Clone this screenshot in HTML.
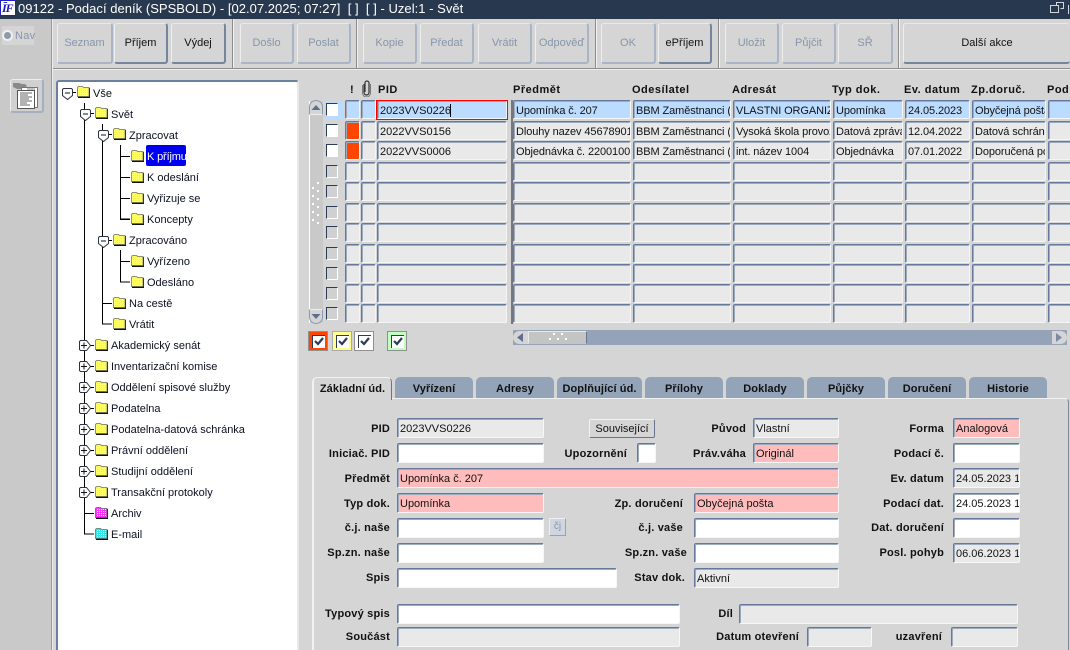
<!DOCTYPE html>
<html style="height:650px;overflow:hidden"><head><meta charset="utf-8"><title>Podací deník</title>
<style>
html,body{margin:0;padding:0}
body{width:1070px;height:650px;overflow:hidden;position:relative;background:#d5d5d5;font:11px "Liberation Sans",Arial,sans-serif;color:#111}
div,span{position:absolute;box-sizing:border-box;white-space:nowrap}
.b{top:23px;height:41px;background:#d5d5d5;border:1px solid #a9b4c4;border-top-color:#e9e9e9;border-left-color:#eee;border-right:2px solid #a9b4c4;border-bottom:2px solid #a9b4c4;border-radius:3px;text-align:center;line-height:38px;color:#8795ab;font-size:11px}
.b.e{color:#111;border-right-color:#75859e;border-bottom-color:#75859e}
.sep{top:19px;height:49px;width:2px;background:linear-gradient(90deg,#8b8b8b 50%,#f2f2f2 50%)}
.r{left:0;width:1070px;height:19px}
.r div{top:0;height:19px;background:#e9e9e9;border-top:1px solid #66799a;border-left:1px solid #66799a;border-right:1px solid #f5f5f5;border-bottom:1px solid #f5f5f5;box-shadow:inset 1px 1px #9dabc0;border-radius:2px;line-height:20px;padding-left:2px;overflow:hidden;letter-spacing:-.1px}
.r .k{left:326px;top:3px;width:12px;height:13px;background:#d0d0d0;border-color:#fff;border-top-color:#2c3b58;border-left-color:#2c3b58;border-width:1px;border-radius:0;box-shadow:none}
.r .a{left:345px;width:15px}.r .g{left:361px;width:15px}.r .p{left:377px;width:130px;letter-spacing:0}.r .q{left:513px;width:118px}.r .o{left:633px;width:98px}.r .d{left:733px;width:98px}.r .t{left:833px;width:70px}.r .v{left:905px;width:65px}.r .z{left:972px;width:74px}.r .w{left:1048px;width:30px}
.r.s div{background:#bcdcff}.r.s .k{background:#fff}
.r .or{background:#ff4500}.r .k.on{background:#fff}
.h{top:83px;font-weight:bold;letter-spacing:.5px;line-height:14px;font-size:11px}
.tr{line-height:14px;color:#0b1020;margin-top:1px}
.tab{top:377px;height:21px;background:#93a3b8;border-radius:5px 5px 0 0;text-align:center;font-weight:bold;line-height:24px;letter-spacing:.1px;color:#111}
.l{font-weight:bold;text-align:right;line-height:14px;letter-spacing:.2px;margin-top:1px}
.f{height:20px;border-top:1px solid #66799a;border-left:1px solid #66799a;border-right:1px solid #f7f7f7;border-bottom:1px solid #f7f7f7;box-shadow:inset 1px 1px #9dabc0;border-radius:2px;background:#fff;line-height:21px;padding-left:2px;overflow:hidden;font-size:11px}
.y{background:#e9e9e9}.pk{background:#ffbcbc}
.cb{top:331px;width:20px;height:20px;border:1px solid #909090}
.cb svg{position:absolute;left:3px;top:3px}
</style></head><body>

<svg width="0" height="0" style="position:absolute"><defs>
<pattern id="dy" width="2" height="2" patternUnits="userSpaceOnUse"><rect width="2" height="2" fill="#ffff60"/><rect width="1" height="1" fill="#e8e8a0"/></pattern>
<pattern id="dm" width="2" height="2" patternUnits="userSpaceOnUse"><rect width="2" height="2" fill="#ff30ff"/><rect width="1" height="1" fill="#ffe0ff"/></pattern>
<pattern id="dc" width="2" height="2" patternUnits="userSpaceOnUse"><rect width="2" height="2" fill="#30e8e8"/><rect width="1" height="1" fill="#e0ffff"/></pattern>
<symbol id="fy" viewBox="0 0 13 12"><path d="M.5 10.500V1.500L1.500.5h4l1 1h5.500v9z" fill="url(#dy)" stroke="#909070"/><path d="M1 11.500h12V2" fill="none" stroke="#111" stroke-width="1.400"/></symbol>
<symbol id="fm" viewBox="0 0 13 12"><path d="M.5 10.500V1.500L1.500.5h4l1 1h5.500v9z" fill="url(#dm)" stroke="#8c708c"/><path d="M1 11.500h12V2" fill="none" stroke="#111" stroke-width="1.400"/></symbol>
<symbol id="fc" viewBox="0 0 13 12"><path d="M.5 10.500V1.500L1.500.5h4l1 1h5.500v9z" fill="url(#dc)" stroke="#708c8c"/><path d="M1 11.500h12V2" fill="none" stroke="#111" stroke-width="1.400"/></symbol>
<symbol id="mn" viewBox="0 0 11 12"><path d="M1.500.5h8l1 1v6l-5 4-5-4v-6z" fill="#fff" stroke="#2c3344"/><path d="M3 5h5" stroke="#111"/></symbol>
<symbol id="pl" viewBox="0 0 12 11"><path d="M1.500.5h6l4 5-4 5h-6l-1-1v-8z" fill="#fff" stroke="#2c3344"/><path d="M2 5.500h6M5 2.500v6" stroke="#111"/></symbol>
<symbol id="ck" viewBox="0 0 13 13"><rect x="0" y="0" width="13" height="13" fill="#fff"/><path d="M.5 13V.5H13" fill="none" stroke="#2c3b58"/><path d="M3 6l3 3 5-6" fill="none" stroke="#2c3b58" stroke-width="2.200"/></symbol>
</defs></svg>

<!-- title bar -->
<div style="left:0;top:0;width:1070px;height:19px;background:#28384f"></div>
<div style="left:0;top:0;width:16px;height:16px;background:#fff;border:1px solid #2020c0"></div>
<div style="left:2px;top:0;font:italic bold 12px 'Liberation Serif',serif;color:#1515c8;letter-spacing:-1px;line-height:16px">ĪF</div>
<div style="left:18px;top:1px;color:#fff;font-size:13px;line-height:16px;letter-spacing:.03px">09122 - Podací deník (SPSBOLD) - [02.07.2025; 07:27]&nbsp; [ ]&nbsp; [ ] - Uzel:1 - Svět</div>
<svg style="position:absolute;left:1050px;top:2px" width="20" height="14"><path d="M6.500 3.500V.5h7v6h-3M.5 3.500h8v7h-8z" fill="none" stroke="#cfd6df"/><path d="M18.500 3v9" stroke="#cfd6df"/></svg>

<!-- sidebar -->
<div style="left:0;top:19px;width:51px;height:631px;background:#c9c9c9"></div>
<div style="left:51px;top:19px;width:2px;height:631px;background:linear-gradient(90deg,#999 50%,#eee 50%)"></div>
<div style="left:2px;top:26px;width:32px;height:19px;background:#d5d5d5"></div>
<div style="left:2px;top:30px;width:11px;height:11px;border-radius:50%;background:#8f99a8;border:2px solid #eef0f2"></div>
<div style="left:15px;top:29px;color:#8795ab;line-height:14px;letter-spacing:.3px">Nav</div>
<div style="left:10px;top:79px;width:34px;height:34px;border:1px solid #eee;border-right:2px solid #a4afc0;border-bottom:2px solid #a4afc0;border-radius:3px;background:#d0d0d0"></div>
<svg style="position:absolute;left:12px;top:81px" width="28" height="28"><path d="M1 2h6l3 1h3l2 2-3 3H5L1 6z" fill="#8a8a8a"/><rect x="9.500" y="6.500" width="16" height="20" fill="#fff" stroke="#777"/><rect x="5.500" y="9.500" width="17" height="18" fill="#fff" stroke="#555"/><path d="M8 12h12M8 14h8M8 16h12M8 18h9M8 20h12M8 22h7M8 24h10" stroke="#666"/><path d="M15 8h8" stroke="#888"/></svg>

<!-- toolbar -->
<div style="left:53px;top:68px;width:1017px;height:2px;background:linear-gradient(#8f8f8f 50%,#eee 50%)"></div>
<div class="b" style="left:57px;width:56px">Seznam</div>
<div class="b e" style="left:114px;width:54px">Příjem</div>
<div class="b e" style="left:171px;width:55px">Výdej</div>
<div class="sep" style="left:232px"></div>
<div class="b" style="left:240px;width:54px">Došlo</div>
<div class="b" style="left:297px;width:54px">Poslat</div>
<div class="b" style="left:363px;width:54px">Kopie</div>
<div class="sep" style="left:356px"></div>
<div class="b" style="left:420px;width:54px">Předat</div>
<div class="b" style="left:478px;width:54px">Vrátit</div>
<div class="b" style="left:535px;width:54px">Odpověď</div>
<div class="sep" style="left:595px"></div>
<div class="b" style="left:601px;width:55px">OK</div>
<div class="b e" style="left:658px;width:54px">ePříjem</div>
<div class="sep" style="left:718px"></div>
<div class="b" style="left:725px;width:54px">Uložit</div>
<div class="b" style="left:782px;width:54px">Půjčit</div>
<div class="b" style="left:838px;width:55px">SŘ</div>
<div class="sep" style="left:898px"></div>
<div class="b e" style="left:903px;width:167px;border-right:0">Další akce</div>

<!-- tree -->
<div style="left:56px;top:80px;width:243px;height:570px;background:#fff;border:2px solid #6b7f9e;border-right:2px solid #e8e8e8;border-bottom:0;border-radius:3px 3px 0 0"></div>
<svg style="position:absolute;left:0;top:0" width="300" height="650">
<g stroke="#000" fill="none" shape-rendering="crispEdges">
<path d="M84.500 103V534H94M102.500 124V324H112M120.500 145V219H130M120.500 250V282H130"/>
<path d="M73 92.500h3M91 113.500h3M109 134.500h3M120 156.500h10M120 177.500h10M120 198.500h10M120 219.500h10M109 240.500h3M120 261.500h10M102 303.500h10M90 345.500h4M90 366.500h4M90 387.500h4M90 408.500h4M90 429.500h4M90 450.500h4M90 471.500h4M90 492.500h4M85 513.500h9"/>
</g>
<use href="#mn" x="62" y="88" width="11" height="12"/><use href="#mn" x="80" y="109" width="11" height="12"/><use href="#mn" x="98" y="130" width="11" height="12"/><use href="#mn" x="98" y="236" width="11" height="12"/>
<use href="#pl" x="79" y="340" width="12" height="11"/><use href="#pl" x="79" y="361" width="12" height="11"/><use href="#pl" x="79" y="382" width="12" height="11"/><use href="#pl" x="79" y="403" width="12" height="11"/><use href="#pl" x="79" y="424" width="12" height="11"/><use href="#pl" x="79" y="445" width="12" height="11"/><use href="#pl" x="79" y="466" width="12" height="11"/><use href="#pl" x="79" y="487" width="12" height="11"/>
<g>
<use href="#fy" x="77" y="86" width="13" height="12"/><use href="#fy" x="95" y="107" width="13" height="12"/><use href="#fy" x="113" y="128" width="13" height="12"/><use href="#fy" x="131" y="150" width="13" height="12"/><use href="#fy" x="131" y="171" width="13" height="12"/><use href="#fy" x="131" y="192" width="13" height="12"/><use href="#fy" x="131" y="213" width="13" height="12"/><use href="#fy" x="113" y="234" width="13" height="12"/><use href="#fy" x="131" y="255" width="13" height="12"/><use href="#fy" x="131" y="276" width="13" height="12"/><use href="#fy" x="113" y="297" width="13" height="12"/><use href="#fy" x="113" y="318" width="13" height="12"/><use href="#fy" x="95" y="339" width="13" height="12"/><use href="#fy" x="95" y="360" width="13" height="12"/><use href="#fy" x="95" y="381" width="13" height="12"/><use href="#fy" x="95" y="402" width="13" height="12"/><use href="#fy" x="95" y="423" width="13" height="12"/><use href="#fy" x="95" y="444" width="13" height="12"/><use href="#fy" x="95" y="465" width="13" height="12"/><use href="#fy" x="95" y="486" width="13" height="12"/><use href="#fm" x="95" y="507" width="13" height="12"/><use href="#fc" x="95" y="528" width="13" height="12"/>
</g></svg>
<div style="left:146px;top:145px;width:40px;height:21px;background:#0000f0;border-radius:2px"></div>
<div class="tr" style="left:93px;top:86px">Vše</div>
<div class="tr" style="left:111px;top:107px">Svět</div>
<div class="tr" style="left:129px;top:128px">Zpracovat</div>
<div class="tr" style="left:147px;top:149px;color:#fff;letter-spacing:-.15px">K příjmu</div>
<div class="tr" style="left:147px;top:170px">K odeslání</div>
<div class="tr" style="left:147px;top:191px">Vyřizuje se</div>
<div class="tr" style="left:147px;top:212px">Koncepty</div>
<div class="tr" style="left:129px;top:233px">Zpracováno</div>
<div class="tr" style="left:147px;top:254px">Vyřízeno</div>
<div class="tr" style="left:147px;top:275px">Odesláno</div>
<div class="tr" style="left:129px;top:296px">Na cestě</div>
<div class="tr" style="left:129px;top:317px">Vrátit</div>
<div class="tr" style="left:111px;top:338px">Akademický senát</div>
<div class="tr" style="left:111px;top:359px">Inventarizační komise</div>
<div class="tr" style="left:111px;top:380px">Oddělení spisové služby</div>
<div class="tr" style="left:111px;top:401px">Podatelna</div>
<div class="tr" style="left:111px;top:422px">Podatelna-datová schránka</div>
<div class="tr" style="left:111px;top:443px">Právní oddělení</div>
<div class="tr" style="left:111px;top:464px">Studijní oddělení</div>
<div class="tr" style="left:111px;top:485px">Transakční protokoly</div>
<div class="tr" style="left:111px;top:506px">Archiv</div>
<div class="tr" style="left:111px;top:527px">E-mail</div>

<!-- grid headers -->
<div class="h" style="left:350px">!</div>
<svg style="position:absolute;left:361px;top:80px" width="11" height="17"><path d="M3 4v8.500a2.500 2.500 0 0 0 5 0V3a2 2 0 0 0-4 0v9" fill="none" stroke="#333" stroke-width="1.200"/><path d="M1.500 5v8a4 4 0 0 0 8 0V4" fill="none" stroke="#777"/></svg>
<div class="h" style="left:378px">PID</div>
<div class="h" style="left:513px">Předmět</div>
<div class="h" style="left:632px">Odesílatel</div>
<div class="h" style="left:732px">Adresát</div>
<div class="h" style="left:832px">Typ dok.</div>
<div class="h" style="left:904px">Ev. datum</div>
<div class="h" style="left:971px">Zp.doruč.</div>
<div class="h" style="left:1047px">Pod</div>

<!-- scrollbar v -->
<div style="left:309px;top:101px;width:14px;height:222px;background:#c9c9c9;border-left:1px solid #fff"></div>
<div style="left:309px;top:100px;width:14px;height:15px;background:#d5d5d5;border:1px solid #8c9bb0;border-bottom-color:#eee;border-radius:7px 7px 0 0"></div>
<svg style="position:absolute;left:311px;top:105px" width="10" height="6"><path d="M5 0l4.500 5h-9z" fill="#5d6f8c"/></svg>
<div style="left:309px;top:309px;width:14px;height:15px;background:#d5d5d5;border:1px solid #8c9bb0;border-top-color:#eee;border-radius:0 0 7px 7px"></div>
<svg style="position:absolute;left:311px;top:314px" width="10" height="6"><path d="M5 5L.5 0h9z" fill="#5d6f8c"/></svg>
<svg style="position:absolute;left:310px;top:180px" width="12" height="50"><g fill="#fff"><rect x="7" y="2" width="2" height="2"/><rect x="2" y="7" width="2" height="2"/><rect x="7" y="10" width="2" height="2"/><rect x="2" y="15" width="2" height="2"/><rect x="7" y="18" width="2" height="2"/><rect x="2" y="23" width="2" height="2"/><rect x="7" y="26" width="2" height="2"/><rect x="2" y="31" width="2" height="2"/><rect x="7" y="34" width="2" height="2"/><rect x="2" y="39" width="2" height="2"/><rect x="7" y="42" width="2" height="2"/></g></svg>

<div style="left:511px;top:100px;width:2px;height:224px;background:#75777c"></div>
<div style="left:326px;top:101px;width:18px;height:18px;background:#bcdcff"></div>

<!-- grid rows -->
<div class="r s" style="top:100px"><div class="k"></div><div class="a"></div><div class="g"></div><div class="p">2023VVS0226</div><div class="q">Upomínka č. 207</div><div class="o">BBM Zaměstnanci (</div><div class="d">VLASTNI ORGANIZ.</div><div class="t">Upomínka</div><div class="v">24.05.2023</div><div class="z">Obyčejná pošta</div><div class="w"></div></div>
<div class="r" style="top:121px"><div class="k on"></div><div class="a or"></div><div class="g"></div><div class="p">2022VVS0156</div><div class="q">Dlouhy nazev 4567890123</div><div class="o">BBM Zaměstnanci (</div><div class="d">Vysoká škola provoz</div><div class="t">Datová zpráva</div><div class="v">12.04.2022</div><div class="z">Datová schránka</div><div class="w"></div></div>
<div class="r" style="top:141px"><div class="k on"></div><div class="a or"></div><div class="g"></div><div class="p">2022VVS0006</div><div class="q">Objednávka č. 2200100</div><div class="o">BBM Zaměstnanci (</div><div class="d">int. název 1004</div><div class="t">Objednávka</div><div class="v">07.01.2022</div><div class="z">Doporučená pošta</div><div class="w"></div></div>
<div class="r" style="top:162px"><div class="k"></div><div class="a"></div><div class="g"></div><div class="p"></div><div class="q"></div><div class="o"></div><div class="d"></div><div class="t"></div><div class="v"></div><div class="z"></div><div class="w"></div></div>
<div class="r" style="top:182px"><div class="k"></div><div class="a"></div><div class="g"></div><div class="p"></div><div class="q"></div><div class="o"></div><div class="d"></div><div class="t"></div><div class="v"></div><div class="z"></div><div class="w"></div></div>
<div class="r" style="top:203px"><div class="k"></div><div class="a"></div><div class="g"></div><div class="p"></div><div class="q"></div><div class="o"></div><div class="d"></div><div class="t"></div><div class="v"></div><div class="z"></div><div class="w"></div></div>
<div class="r" style="top:223px"><div class="k"></div><div class="a"></div><div class="g"></div><div class="p"></div><div class="q"></div><div class="o"></div><div class="d"></div><div class="t"></div><div class="v"></div><div class="z"></div><div class="w"></div></div>
<div class="r" style="top:244px"><div class="k"></div><div class="a"></div><div class="g"></div><div class="p"></div><div class="q"></div><div class="o"></div><div class="d"></div><div class="t"></div><div class="v"></div><div class="z"></div><div class="w"></div></div>
<div class="r" style="top:264px"><div class="k"></div><div class="a"></div><div class="g"></div><div class="p"></div><div class="q"></div><div class="o"></div><div class="d"></div><div class="t"></div><div class="v"></div><div class="z"></div><div class="w"></div></div>
<div class="r" style="top:284px"><div class="k"></div><div class="a"></div><div class="g"></div><div class="p"></div><div class="q"></div><div class="o"></div><div class="d"></div><div class="t"></div><div class="v"></div><div class="z"></div><div class="w"></div></div>
<div class="r" style="top:304px"><div class="k"></div><div class="a"></div><div class="g"></div><div class="p"></div><div class="q"></div><div class="o"></div><div class="d"></div><div class="t"></div><div class="v"></div><div class="z"></div><div class="w"></div></div>
<div style="left:376px;top:100px;width:132px;height:20px;border:1px solid #f00"></div>
<div style="left:450px;top:104px;width:1px;height:13px;background:#000"></div>

<!-- color legend -->
<div class="cb" style="left:308px;background:#ff4500"><svg width="13" height="13" style="left:3px;top:3px"><use href="#ck"/></svg></div>
<div class="cb" style="left:332px;background:#ffff90;border-color:#aaa"><svg width="13" height="13"><use href="#ck"/></svg></div>
<div class="cb" style="left:354px;background:#fff"><svg width="13" height="13"><use href="#ck"/></svg></div>
<div class="cb" style="left:387px;background:#c0ffc0"><svg width="13" height="13"><use href="#ck"/></svg></div>

<!-- h scroll -->
<div style="left:513px;top:330px;width:554px;height:15px;background:#94a3b8"></div>
<div style="left:513px;top:331px;width:15px;height:13px;background:#d5d5d5;border-radius:7px 0 0 7px"></div>
<svg style="position:absolute;left:517px;top:333px" width="7" height="9"><path d="M0 4.500L6 0v9z" fill="#5d6f8c"/></svg>
<div style="left:528px;top:331px;width:59px;height:13px;background:#c4c4c4;border:1px solid #e9e9e9;border-right-color:#66768f;border-bottom-color:#c4c4c4"></div>
<svg style="position:absolute;left:548px;top:333px" width="22" height="10"><g fill="#fff"><rect x="5" y="0" width="2" height="2"/><rect x="13" y="0" width="2" height="2"/><rect x="1" y="5" width="2" height="2"/><rect x="9" y="5" width="2" height="2"/><rect x="17" y="5" width="2" height="2"/></g></svg>
<div style="left:1052px;top:331px;width:15px;height:13px;background:#d5d5d5;border-radius:0 7px 7px 0"></div>
<svg style="position:absolute;left:1056px;top:333px" width="7" height="9"><path d="M6 4.500L0 0v9z" fill="#7c8ba3"/></svg>

<!-- tabs -->
<div style="left:312px;top:398px;width:757px;height:252px;background:#d5d5d5;border-top:1px solid #f2f2f2;border-left:2px solid #f2f2f2;border-right:1px solid #7b879a;border-top-right-radius:4px"></div>
<div class="tab" style="left:312px;width:80px;height:23px;background:#d5d5d5;border:1px solid #f2f2f2;border-left:2px solid #f2f2f2;border-right:1px solid #66768f;border-bottom:0;line-height:23px">Základní úd.</div>
<div class="tab" style="left:395px;width:78px">Vyřízení</div>
<div class="tab" style="left:476px;width:78px">Adresy</div>
<div class="tab" style="left:557px;width:85px">Doplňující úd.</div>
<div class="tab" style="left:645px;width:78px">Přílohy</div>
<div class="tab" style="left:726px;width:78px">Doklady</div>
<div class="tab" style="left:807px;width:78px">Půjčky</div>
<div class="tab" style="left:888px;width:78px">Doručení</div>
<div class="tab" style="left:969px;width:78px">Historie</div>

<!-- labels -->
<div class="l" style="left:290px;width:100px;top:421px">PID</div>
<div class="l" style="left:290px;width:100px;top:446px">Iniciač. PID</div>
<div class="l" style="left:290px;width:100px;top:471px">Předmět</div>
<div class="l" style="left:290px;width:100px;top:496px">Typ dok.</div>
<div class="l" style="left:290px;width:100px;top:520px">č.j. naše</div>
<div class="l" style="left:290px;width:100px;top:545px">Sp.zn. naše</div>
<div class="l" style="left:290px;width:100px;top:570px">Spis</div>
<div class="l" style="left:290px;width:100px;top:606px">Typový spis</div>
<div class="l" style="left:290px;width:100px;top:629px">Součást</div>
<div class="l" style="left:527px;width:100px;top:446px">Upozornění</div>
<div class="l" style="left:583px;width:100px;top:496px">Zp. doručení</div>
<div class="l" style="left:583px;width:100px;top:520px">č.j. vaše</div>
<div class="l" style="left:587px;width:100px;top:545px">Sp.zn. vaše</div>
<div class="l" style="left:585px;width:100px;top:570px">Stav dok.</div>
<div class="l" style="left:646px;width:100px;top:421px">Původ</div>
<div class="l" style="left:646px;width:100px;top:446px">Práv.váha</div>
<div class="l" style="left:844px;width:100px;top:421px">Forma</div>
<div class="l" style="left:844px;width:100px;top:446px">Podací č.</div>
<div class="l" style="left:844px;width:100px;top:471px">Ev. datum</div>
<div class="l" style="left:844px;width:100px;top:496px">Podací dat.</div>
<div class="l" style="left:844px;width:100px;top:520px">Dat. doručení</div>
<div class="l" style="left:844px;width:100px;top:545px">Posl. pohyb</div>
<div class="l" style="left:633px;width:100px;top:606px">Díl</div>
<div class="l" style="left:699px;width:100px;top:629px">Datum otevření</div>
<div class="l" style="left:842px;width:100px;top:629px">uzavření</div>

<!-- fields -->
<div class="f y" style="left:397px;top:418px;width:147px">2023VVS0226</div>
<div class="f" style="left:397px;top:443px;width:147px"></div>
<div class="f pk" style="left:397px;top:468px;width:442px">Upomínka č. 207</div>
<div class="f pk" style="left:397px;top:493px;width:147px">Upomínka</div>
<div class="f" style="left:397px;top:518px;width:147px"></div>
<div class="f" style="left:397px;top:543px;width:147px"></div>
<div class="f" style="left:397px;top:568px;width:220px"></div>
<div class="f" style="left:397px;top:604px;width:283px"></div>
<div class="f y" style="left:397px;top:627px;width:283px"></div>
<div style="left:549px;top:518px;width:17px;height:18px;background:#cfd6df;border:1px solid #eee;border-right-color:#93a3b8;border-bottom-color:#93a3b8;text-align:center;line-height:15px;color:#8795ab;font-size:10px">čj</div>
<div style="left:589px;top:419px;width:66px;height:19px;background:#d5d5d5;border:1px solid #f2f2f2;border-right:1px solid #66768f;border-bottom:1px solid #66768f;border-radius:2px;text-align:center;line-height:18px">Související</div>
<div class="f" style="left:637px;top:443px;width:19px"></div>
<div class="f y" style="left:753px;top:418px;width:86px">Vlastní</div>
<div class="f pk" style="left:753px;top:443px;width:86px">Originál</div>
<div class="f pk" style="left:694px;top:493px;width:145px">Obyčejná pošta</div>
<div class="f" style="left:694px;top:518px;width:145px"></div>
<div class="f" style="left:694px;top:543px;width:145px"></div>
<div class="f y" style="left:694px;top:568px;width:145px">Aktivní</div>
<div class="f pk" style="left:953px;top:418px;width:67px">Analogová</div>
<div class="f" style="left:953px;top:443px;width:67px"></div>
<div class="f y" style="left:953px;top:468px;width:67px">24.05.2023 1</div>
<div class="f" style="left:953px;top:493px;width:67px">24.05.2023 1</div>
<div class="f" style="left:953px;top:518px;width:67px"></div>
<div class="f y" style="left:953px;top:543px;width:67px">06.06.2023 1</div>
<div class="f y" style="left:739px;top:604px;width:279px"></div>
<div class="f y" style="left:807px;top:627px;width:65px"></div>
<div class="f y" style="left:951px;top:627px;width:67px"></div>
</body></html>
